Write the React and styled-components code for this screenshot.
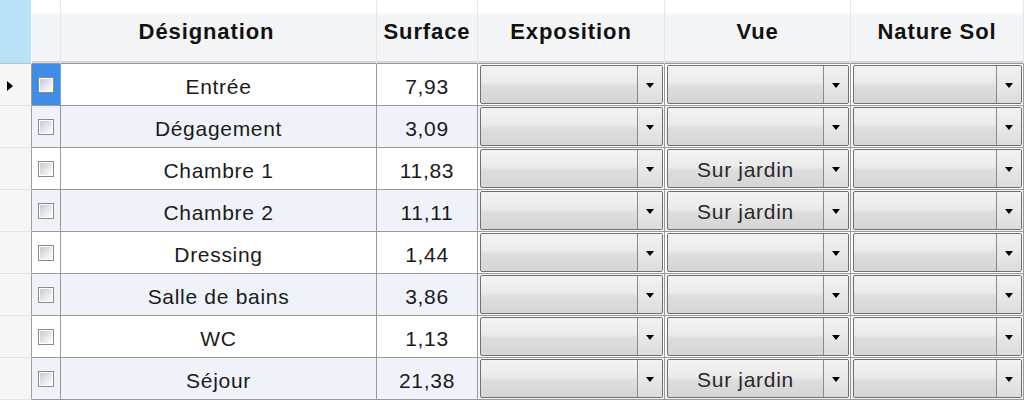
import React from "react";
import styled, { createGlobalStyle } from "styled-components";

const Global = createGlobalStyle`
  html, body { margin: 0; padding: 0; background: #ffffff; }
  body { font-family: "Liberation Sans", Arial, sans-serif; overflow: hidden; }
`;

const Grid = styled.div`
  display: grid;
  grid-template-columns: 32px 29px 316px 101px 187px 186px 173px;
  grid-auto-rows: 42px;
  grid-template-rows: 64px;
  width: 1024px;
`;

const Corner = styled.div`
  background: #b9e2f7;
  border-right: 1px solid #ffffff;
  border-bottom: 1px solid #a9c9da;
  box-sizing: border-box;
`;

const HeaderCell = styled.div`
  box-sizing: border-box;
  display: flex;
  align-items: center;
  justify-content: center;
  padding-right: ${(p) => p.$shift || 0}px;
  background: linear-gradient(to bottom, #ffffff 0, #ffffff 13px, #f4f5f7 14px, #f3f4f6 100%);
  border-right: 1px solid #e6e8ec;
  border-bottom: 1px solid #9c9c9c;
  box-shadow: inset 0 -2px 0 #d6d7da;
  font-weight: 700;
  font-size: 22px;
  letter-spacing: 0.9px;
  color: #111111;
  white-space: nowrap;
`;

const RowHead = styled.div`
  box-sizing: border-box;
  display: flex;
  align-items: center;
  padding: 2px 0 0 7px;
  background: #f6f6f6;
  border-right: 1px solid #a0a0a0;
  border-bottom: 1px solid #e3e3e3;
`;

const Arrow = styled.span`
  width: 0;
  height: 0;
  border-top: 5.5px solid transparent;
  border-bottom: 5.5px solid transparent;
  border-left: 6px solid #000000;
`;

const Cell = styled.div`
  box-sizing: border-box;
  display: flex;
  align-items: center;
  justify-content: center;
  padding-top: ${(p) => (p.$box ? 0 : 4)}px;
  background: ${(p) => (p.$selected ? "#3d8ee8" : p.$alt ? "#eff3f9" : "#ffffff")};
  border-right: 1px solid #9a9a9a;
  border-bottom: 1px solid #9a9a9a;
  font-size: 21px;
  letter-spacing: 0.7px;
  color: #1a1a1a;
  white-space: nowrap;
`;

const ComboCell = styled.div`
  box-sizing: border-box;
  display: flex;
  padding: 1px 1px 1px 2px;
  background: ${(p) => (p.$alt ? "#eff3f9" : "#ffffff")};
  border-right: 1px solid #9a9a9a;
  border-bottom: 1px solid #9a9a9a;
`;

const Combo = styled.div`
  flex: 1;
  display: flex;
  border: 1px solid #707070;
  border-radius: 2px;
  background: linear-gradient(to bottom, #f3f3f3 0%, #ebebeb 45%, #dddddd 55%, #d5d5d5 100%);
  overflow: hidden;
`;

const ComboText = styled.div`
  flex: 1;
  display: flex;
  align-items: center;
  justify-content: center;
  padding-top: 3px;
  font-size: 21px;
  letter-spacing: 0.7px;
  color: #2a2a2a;
  white-space: nowrap;
`;

const ComboButton = styled.div`
  width: 24px;
  display: flex;
  align-items: center;
  justify-content: center;
  padding-top: 2px;
  border-left: 1px solid #8a8a8a;
  background: linear-gradient(to bottom, #f2f2f2 0%, #e8e8e8 50%, #dcdcdc 100%);
`;

const Tri = styled.span`
  width: 0;
  height: 0;
  border-left: 4.5px solid transparent;
  border-right: 4.5px solid transparent;
  border-top: 5px solid #000000;
`;

const Check = styled.span`
  box-sizing: border-box;
  width: 16px;
  height: 16px;
  border: 1px solid #8a8a8a;
  background: #ffffff;
  padding: 1px;
  display: flex;
  &::after {
    content: "";
    flex: 1;
    background: linear-gradient(135deg, #c6c9ce 0%, #e4e5e8 50%, #ffffff 100%);
  }
`;

const rows = [
  { name: "Entrée", surface: "7,93", vue: "" },
  { name: "Dégagement", surface: "3,09", vue: "" },
  { name: "Chambre 1", surface: "11,83", vue: "Sur jardin" },
  { name: "Chambre 2", surface: "11,11", vue: "Sur jardin" },
  { name: "Dressing", surface: "1,44", vue: "" },
  { name: "Salle de bains", surface: "3,86", vue: "" },
  { name: "WC", surface: "1,13", vue: "" },
  { name: "Séjour", surface: "21,38", vue: "Sur jardin" },
];

function ComboBox({ value, alt }) {
  return (
    <ComboCell $alt={alt}>
      <Combo>
        <ComboText>{value}</ComboText>
        <ComboButton>
          <Tri />
        </ComboButton>
      </Combo>
    </ComboCell>
  );
}

export default function App() {
  return (
    <>
      <Global />
      <Grid>
        <Corner />
        <HeaderCell />
        <HeaderCell $shift={24}>Désignation</HeaderCell>
        <HeaderCell>Surface</HeaderCell>
        <HeaderCell>Exposition</HeaderCell>
        <HeaderCell>Vue</HeaderCell>
        <HeaderCell>Nature Sol</HeaderCell>
        {rows.map((r, i) => {
          const alt = i % 2 === 1;
          return (
            <React.Fragment key={r.name}>
              <RowHead>{i === 0 && <Arrow />}</RowHead>
              <Cell $box $alt={alt} $selected={i === 0}>
                <Check />
              </Cell>
              <Cell $alt={alt}>{r.name}</Cell>
              <Cell $alt={alt}>{r.surface}</Cell>
              <ComboBox alt={alt} value="" />
              <ComboBox alt={alt} value={r.vue} />
              <ComboBox alt={alt} value="" />
            </React.Fragment>
          );
        })}
      </Grid>
    </>
  );
}
